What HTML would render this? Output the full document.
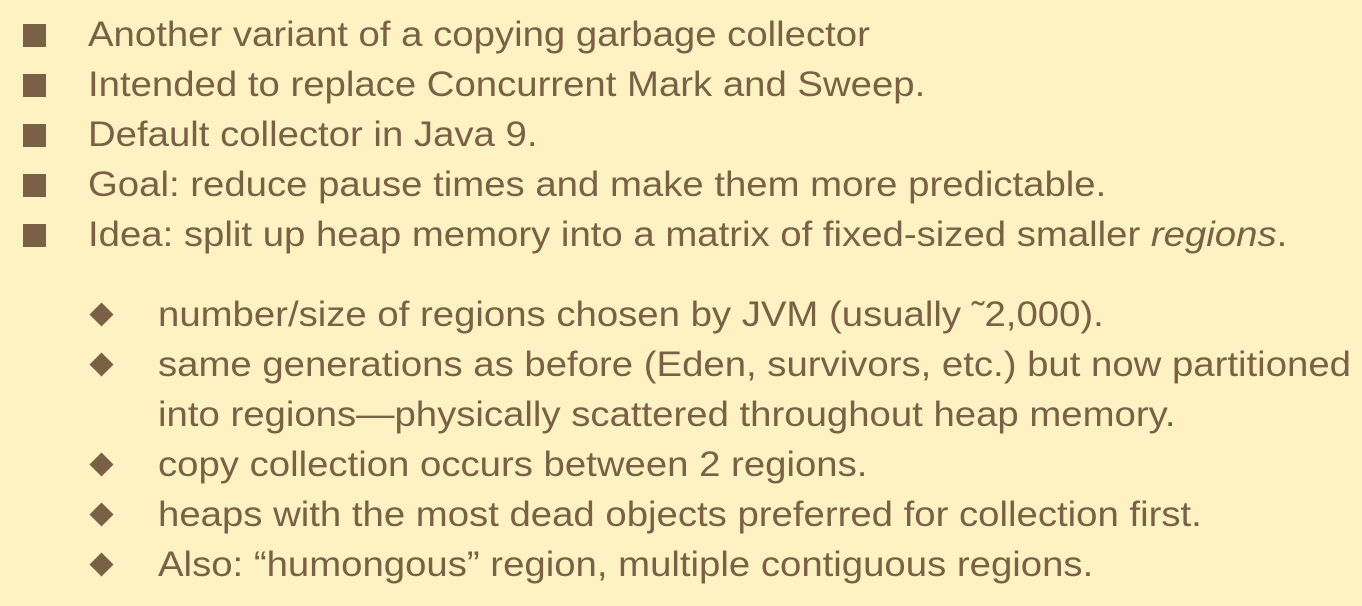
<!DOCTYPE html>
<html><head><meta charset="utf-8"><style>
body{margin:0;width:1362px;height:606px;background:#fef2c2;overflow:hidden;font-family:"Liberation Sans",sans-serif;color:#7a6145;}
.l{position:absolute;font-size:35px;white-space:nowrap;line-height:1;transform:scaleX(1.095);transform-origin:0 0;}
.sq{position:absolute;left:23px;width:23px;height:23px;background:#7a6145;}
.dm{position:absolute;left:93px;width:17px;height:17px;background:#7a6145;transform:rotate(45deg);}
</style></head><body>
<div class="sq" style="top:24px"></div><div class="l" style="left:88px;top:17px">Another variant of a copying garbage collector</div>
<div class="sq" style="top:74px"></div><div class="l" style="left:88px;top:67px">Intended to replace Concurrent Mark and Sweep.</div>
<div class="sq" style="top:124px"></div><div class="l" style="left:88px;top:117px">Default collector in Java 9.</div>
<div class="sq" style="top:174px"></div><div class="l" style="left:88px;top:167px">Goal: reduce pause times and make them more predictable.</div>
<div class="sq" style="top:224px"></div><div class="l" style="left:88px;top:217px">Idea: split up heap memory into a matrix of fixed-sized smaller <i>regions</i>.</div>
<div class="dm" style="top:306px"></div><div class="l" style="left:158px;top:297px">number/size of regions chosen by JVM (usually ˜2,000).</div>
<div class="dm" style="top:356px"></div><div class="l" style="left:158px;top:347px">same generations as before (Eden, survivors, etc.) but now partitioned</div>
<div class="l" style="left:158px;top:397px">into regions—physically scattered throughout heap memory.</div>
<div class="dm" style="top:456px"></div><div class="l" style="left:158px;top:447px">copy collection occurs between 2 regions.</div>
<div class="dm" style="top:506px"></div><div class="l" style="left:158px;top:497px">heaps with the most dead objects preferred for collection first.</div>
<div class="dm" style="top:556px"></div><div class="l" style="left:158px;top:547px">Also: “humongous” region, multiple contiguous regions.</div>
</body></html>
